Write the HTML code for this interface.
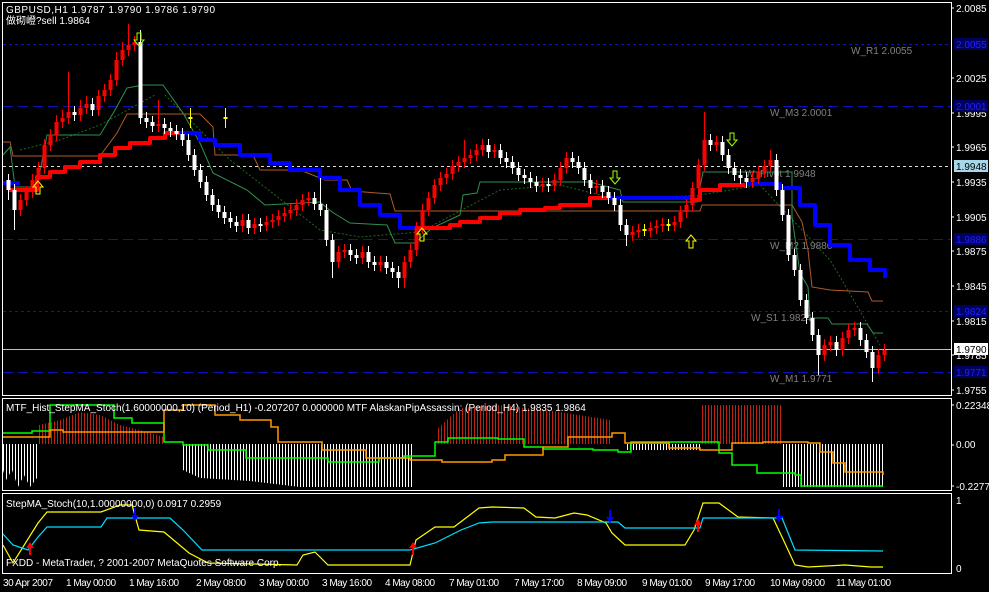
<!DOCTYPE html>
<html><head><meta charset="utf-8"><style>
html,body{margin:0;padding:0;background:#000;width:989px;height:592px;overflow:hidden}
svg{display:block;font-family:"Liberation Sans","Noto Sans CJK SC",sans-serif}
</style></head><body>
<svg width="989" height="592" viewBox="0 0 989 592" xmlns="http://www.w3.org/2000/svg">
<defs>
<pattern id="pw" x="0" y="0" width="3" height="10" patternUnits="userSpaceOnUse"><rect x="0" y="0" width="1" height="10" fill="#fff"/></pattern>
<pattern id="pr" x="0" y="0" width="3" height="10" patternUnits="userSpaceOnUse"><rect x="0" y="0" width="1" height="10" fill="#c02010"/></pattern>
</defs>
<rect width="989" height="592" fill="#000"/>
<rect x="2.5" y="2.5" width="949" height="393" fill="none" stroke="#fff"/>
<rect x="2.5" y="398.5" width="949" height="92" fill="none" stroke="#fff"/>
<rect x="2.5" y="493.5" width="949" height="80" fill="none" stroke="#fff"/>
<g stroke-width="1">
<line x1="3" x2="951" y1="44.5" y2="44.5" stroke="#1010c0" stroke-dasharray="3,3"/>
<line x1="3" x2="951" y1="106.5" y2="106.5" stroke="#1010c0" stroke-dasharray="10,5"/>
<line x1="3" x2="951" y1="166.5" y2="166.5" stroke="#ddd" stroke-dasharray="3,3"/>
<line x1="3" x2="951" y1="239.5" y2="239.5" stroke="#1010c0" stroke-dasharray="10,5"/>
<line x1="3" x2="951" y1="311.5" y2="311.5" stroke="#1010c0" stroke-dasharray="3,3"/>
<line x1="3" x2="951" y1="372.5" y2="372.5" stroke="#1010c0" stroke-dasharray="10,5"/>
</g>
<line x1="3" x2="951" y1="349.5" y2="349.5" stroke="#c0c0c0"/>
<g fill="#808080" font-size="10">
<text x="851" y="54">W_R1 2.0055</text>
<text x="770" y="116">W_M3 2.0001</text>
<text x="745" y="177">W_Pivot 1.9948</text>
<text x="770" y="249">W_M2 1.9886</text>
<text x="751" y="321">W_S1 1.9824</text>
<text x="770" y="382">W_M1 1.9771</text>
</g>
<polyline points="20,150 60,140 100,125 155,95" fill="none" stroke="#1a6a1a" stroke-dasharray="2,2"/>
<polyline points="165,95 230,160 320,230 360,237 420,232 500,190 560,185 620,200 700,195 760,185 830,260 880,345" fill="none" stroke="#1a6a1a" stroke-dasharray="2,2"/>
<polyline points="3,142 10,142 13,156 100,156 117,133 127,114 200,114 213,127 215,155 253,155 260,170 300,170 325,180 347,180 352,191 390,194 395,211 700,211 702,205 792,205 802,222 808,250 812,287 830,290 868,292 872,301 883,301" fill="none" stroke="#b05a28"/>
<polyline points="3,155 10,147 15,187 37,187 47,135 100,135 115,110 127,88 143,85 163,85 183,113 200,143 213,173 247,190 265,205 320,202 332,212 350,223 387,225 395,243 415,243 432,228 460,215 463,195 477,193 480,182 590,182 620,190 623,202 697,202 703,172 740,172 792,172 792,217 800,273 808,287 810,318 828,318 832,324 867,324 873,333 883,333" fill="none" stroke="#2f8f4f"/>
<g fill="none" stroke-width="4" stroke-linejoin="round">
<path stroke="#f00" d="M8 190 H37 V177 H50 V172 H65 V167 H80 V162 H100 V155 H115 V148 H130 V143 H150 V138 H165 V133 H180"/>
<path stroke="#00f" d="M180 133 H200 V140 H215 V145 H240 V155 H270 V163 H290 V170 H320 V178 H340 V190 H360 V205 H380 V215 H400 V228 H415"/>
<path stroke="#f00" d="M415 228 H450 V225 H460 V222 H480 V218 H500 V213 H520 V210 H545 V208 H560 V205 H590 V198 H608"/>
<path stroke="#00f" d="M608 198 H690 V200"/>
<path stroke="#f00" d="M690 200 H700 V190 H720 V185 H745 V184"/>
<path stroke="#00f" d="M745 184 H780 V188 H800 V205 H815 V225 H830 V245 H850 V260 H870 V270 H885 V278"/>
<path stroke="#00f" d="M3 183 H20"/>
</g>
<g fill="none" stroke-width="1">
<path stroke="#f00" d="M20.5 194V216M26.5 186V206M32.5 174V198M38.5 162V186M44.5 139V174M50.5 129V151M56.5 115V141M62.5 110V128M68.5 72V124M80.5 100V121M86.5 96V114M98.5 90V116M104.5 84V102M110.5 74V96M116.5 52V86M122.5 42V66M128.5 24V56M134.5 36V51M158.5 100V132M242.5 214V232M254.5 218V234M266.5 216V231M272.5 214V228M278.5 210V226M284.5 207V222M290.5 204V219M296.5 199V216M302.5 194V211M308.5 192V206M338.5 246V268M344.5 244V258M362.5 246V264M380.5 256V271M404.5 256V288M410.5 244V268M416.5 222V256M422.5 204V234M428.5 192V216M434.5 179V204M440.5 172V191M446.5 168V184M452.5 160V180M458.5 156V172M464.5 140V168M470.5 149V164M476.5 144V161M482.5 139V156M494.5 144V158M542.5 178V192M554.5 174V191M560.5 162V186M566.5 152V174M596.5 180V194M632.5 226V241M638.5 224V238M650.5 222V237M656.5 220V234M662.5 218V232M674.5 216V231M680.5 206V228M686.5 199V218M692.5 182V211M698.5 159V194M704.5 112V171M716.5 136V151M752.5 172V188M758.5 166V184M764.5 160V178M770.5 150V172M824.5 339V361M830.5 336V351M842.5 332V356M848.5 324V344M854.5 322V336M878.5 349V374M884.5 344V361"/>
<path stroke="#fff" d="M8.5 174V200M14.5 184V230M74.5 106V121M92.5 98V116M140.5 30V124M146.5 112V128M152.5 116V132M164.5 118V134M170.5 122V137M176.5 125V140M182.5 128V146M188.5 134V161M194.5 149V176M200.5 164V188M206.5 176V201M212.5 189V211M218.5 199V218M224.5 206V224M230.5 212V228M236.5 216V232M248.5 214V234M260.5 218V232M314.5 192V210M320.5 178V216M326.5 204V246M332.5 234V278M350.5 244V261M356.5 249V264M368.5 246V268M374.5 256V271M386.5 256V274M392.5 262V278M398.5 266V288M488.5 139V158M500.5 144V164M506.5 152V168M512.5 156V174M518.5 162V181M524.5 169V184M530.5 172V188M536.5 176V192M548.5 178V192M572.5 152V168M578.5 156V174M584.5 162V186M590.5 174V194M602.5 180V198M608.5 186V204M614.5 192V211M620.5 199V231M626.5 219V246M710.5 134V151M722.5 136V161M728.5 149V174M734.5 162V181M740.5 169V184M746.5 172V188M776.5 154V196M782.5 184V221M788.5 209V261M794.5 249V276M800.5 264V306M806.5 294V324M812.5 312V341M818.5 329V375M836.5 336V356M860.5 322V346M866.5 334V358M872.5 346V382"/>
<path stroke="#ff0" d="M644.5 224V236M668.5 219V231M190.5 108V128M225.5 108V128"/>
</g>
<g fill="none" stroke-width="4">
<path stroke="#f00" d="M20.5 200V210M26.5 192V200M32.5 180V192M38.5 168V180M44.5 145V168M50.5 135V145M56.5 122V135M62.5 118V122M68.5 112V118M80.5 108V115M86.5 104V108M98.5 96V110M104.5 90V96M110.5 80V90M116.5 60V80M122.5 50V60M128.5 45V50M134.5 42V45M158.5 124V126M242.5 220V226M254.5 224V228M266.5 222V225M272.5 220V222M278.5 216V220M284.5 213V216M290.5 210V213M296.5 205V210M302.5 200V205M308.5 198V200M338.5 252V262M344.5 250V252M362.5 252V258M380.5 262V265M404.5 262V278M410.5 250V262M416.5 228V250M422.5 210V228M428.5 198V210M434.5 185V198M440.5 178V185M446.5 174V178M452.5 166V174M458.5 162V166M464.5 158V162M470.5 155V158M476.5 150V155M482.5 145V150M494.5 150V152M542.5 184V186M554.5 180V185M560.5 168V180M566.5 158V168M596.5 186V188M632.5 232V235M638.5 230V232M650.5 228V231M656.5 226V228M662.5 224V226M674.5 222V225M680.5 212V222M686.5 205V212M692.5 188V205M698.5 165V188M704.5 140V165M716.5 142V145M752.5 178V182M758.5 172V178M764.5 166V172M770.5 160V166M824.5 345V355M830.5 342V345M842.5 338V350M848.5 330V338M854.5 328V330M878.5 355V368M884.5 350V355"/>
<path stroke="#fff" d="M8.5 180V190M14.5 190V210M74.5 112V115M92.5 104V110M140.5 42V118M146.5 118V122M152.5 122V126M164.5 124V128M170.5 128V131M176.5 131V134M182.5 134V140M188.5 140V155M194.5 155V170M200.5 170V182M206.5 182V195M212.5 195V205M218.5 205V212M224.5 212V218M230.5 218V222M236.5 222V226M248.5 220V228M260.5 224V226M314.5 198V204M320.5 204V210M326.5 210V240M332.5 240V262M350.5 250V255M356.5 255V258M368.5 252V262M374.5 262V265M386.5 262V268M392.5 268V272M398.5 272V278M488.5 145V152M500.5 150V158M506.5 158V162M512.5 162V168M518.5 168V175M524.5 175V178M530.5 178V182M536.5 182V186M548.5 184V186M572.5 158V162M578.5 162V168M584.5 168V180M590.5 180V188M602.5 186V192M608.5 192V198M614.5 198V205M620.5 205V225M626.5 225V235M710.5 140V145M722.5 142V155M728.5 155V168M734.5 168V175M740.5 175V178M746.5 178V182M776.5 160V190M782.5 190V215M788.5 215V255M794.5 255V270M800.5 270V300M806.5 300V318M812.5 318V335M818.5 335V355M836.5 342V350M860.5 328V340M866.5 340V352M872.5 352V368"/>
<path stroke="#ff0" d="M644.5 229V231M668.5 224V226M190.5 117V119M225.5 117V119"/>
</g>
<g fill="none">
<path stroke="#ff0" d="M38 181 l-5,6 h3 v7 h4 v-7 h3 z M422 228 l-5,6 h3 v7 h4 v-7 h3 z M691 235 l-5,6 h3 v7 h4 v-7 h3 z"/>
<path stroke="#a0ff00" d="M139 46 l-5,-6 h3 v-7 h4 v7 h3 z M615 184 l-5,-6 h3 v-7 h4 v7 h3 z M732 146 l-5,-6 h3 v-7 h4 v7 h3 z"/>
</g>
<polygon fill="url(#pw)" points="3,444 37,444 37,478 30,487 24,475 18,487 12,470 6,480 3,470"/>
<polygon fill="url(#pr)" points="39,444 164,444 164,437 140,430 120,425 100,415 80,412 60,420 39,425"/>
<polygon fill="url(#pw)" points="183,444 414,444 414,487 300,487 250,481 200,478 183,470"/>
<polygon fill="url(#pr)" points="436,444 610,444 610,420 560,412 500,405 460,408 436,430"/>
<polygon fill="url(#pw)" points="625,444 700,444 700,450 625,450"/>
<polygon fill="url(#pr)" points="702,444 782,444 782,405 702,405"/>
<polygon fill="url(#pw)" points="783,444 884,444 884,487 783,487"/>
<g fill="none" stroke-width="1.5">
<path stroke="#00ff00" d="M3 433 H32 V431 H50 V423 V405 H82 H114 V418 H132 V423 H164 V442 H183 V445 H208 V450 H246 V458 H328 V462 H379 V458 H404 V456 H435 V452 V442 H448 V438 H498 V439 H524 V447 H543 V449 H593 V450 H618 V452 H631 V442 H700 H719 V453 H732 V465 H757 V473 H795 V475 H801 V486 H883"/>
<path stroke="#ff9900" d="M3 437 H38 H50 V430 H63 V432 H145 H164 V410 H183 V405 H215 V415 H240 V420 H271 V427 H278 V442 H322 V450 H366 V458 H410 V460 H442 V462 H492 V460 H505 V455 H543 V447 H568 V437 H612 V433 H625 V443 H669 V448 H700 V450 H732 V443 H763 V442 H808 V443 H820 V452 H833 V463 H845 V472 H883 V475"/>
</g>
<polyline fill="none" stroke="#ffff00" stroke-width="1.2" points="3,545 13,563 38,523 47,512 101,512 120,505 132,505 139,530 164,532 189,553 208,563 297,565 303,555 315,552 328,565 410,565 416,540 435,527 454,527 479,508 492,507 524,508 536,517 555,518 574,513 587,515 606,523 612,533 625,545 685,545 694,530 703,503 719,503 738,517 773,518 782,537 795,565 808,567 845,565 871,567 883,567"/>
<polyline fill="none" stroke="#00e0ff" stroke-width="1.2" points="3,534 13,545 28,550 38,537 47,527 101,527 107,518 170,518 183,530 202,550 410,550 435,543 461,530 479,523 492,522 618,522 625,528 700,528 703,518 782,518 795,550 883,551"/>
<path fill="#f00" d="M30 542 l-4,6 h3 v7 h2 v-7 h3 z M413 542 l-4,6 h3 v7 h2 v-7 h3 z M698 519 l-4,6 h3 v7 h2 v-7 h3 z"/>
<path fill="#00f" d="M135 521 l-4,-6 h3 v-7 h2 v7 h3 z M610 523 l-4,-6 h3 v-7 h2 v7 h3 z M779 522 l-4,-6 h3 v-7 h2 v7 h3 z"/>
<g fill="#fff" font-size="10">
<text x="956" y="12">2.0085</text><text x="956" y="82">2.0025</text><text x="956" y="117">1.9995</text><text x="956" y="151">1.9965</text><text x="956" y="186">1.9935</text><text x="956" y="221">1.9905</text><text x="956" y="255">1.9875</text><text x="956" y="290">1.9845</text><text x="956" y="325">1.9815</text><text x="956" y="359">1.9785</text><text x="956" y="394">1.9755</text>
<text x="956" y="409">0.22348</text><text x="956" y="448">0.00</text><text x="956" y="490">-0.22771</text><text x="956" y="504">1</text><text x="956" y="572">0</text>
</g>
<g stroke="#fff"><path d="M951 8H954M951 78H954M951 113H954M951 147H954M951 182H954M951 217H954M951 251H954M951 286H954M951 321H954M951 355H954M951 390H954M951 405H954M951 445H954M951 486H954"/></g>
<g font-size="10">
<rect x="954" y="38" width="34" height="12" fill="#000060"/><text x="956" y="48" fill="#2020ff">2.0055</text>
<rect x="954" y="100" width="34" height="12" fill="#000060"/><text x="956" y="110" fill="#2020ff">2.0001</text>
<rect x="954" y="160" width="34" height="12" fill="#a8d8e8"/><text x="956" y="170" fill="#000">1.9948</text>
<rect x="954" y="233" width="34" height="12" fill="#000060"/><text x="956" y="243" fill="#2020ff">1.9886</text>
<rect x="954" y="305" width="34" height="12" fill="#000060"/><text x="956" y="315" fill="#2020ff">1.9824</text>
<rect x="954" y="343" width="34" height="12" fill="#fff"/><text x="956" y="353" fill="#000">1.9790</text>
<rect x="954" y="366" width="34" height="12" fill="#000060"/><text x="956" y="376" fill="#2020ff">1.9771</text>
</g>
<g fill="#fff" font-size="10">
<text x="6" y="13" textLength="209">GBPUSD,H1  1.9787 1.9790 1.9786 1.9790</text>
<text x="6" y="24">做砌嶝?sell 1.9864</text>
<text x="6" y="411">MTF_Hist_StepMA_Stoch(1.60000000,10) (Period_H1) -0.207207 0.000000  MTF AlaskanPipAssassin: (Period_H4) 1.9835 1.9864</text>
<text x="6" y="507">StepMA_Stoch(10,1.00000000,0) 0.0917 0.2959</text>
<text x="6" y="566">FXDD - MetaTrader, ? 2001-2007 MetaQuotes Software Corp.</text>
</g>
<g fill="#fff" font-size="10">
<text x="3" y="586" textLength="50">30 Apr 2007</text><text x="66" y="586" textLength="50">1 May 00:00</text><text x="129" y="586" textLength="50">1 May 16:00</text><text x="196" y="586" textLength="50">2 May 08:00</text><text x="259" y="586" textLength="50">3 May 00:00</text><text x="322" y="586" textLength="50">3 May 16:00</text><text x="385" y="586" textLength="50">4 May 08:00</text><text x="449" y="586" textLength="50">7 May 01:00</text><text x="514" y="586" textLength="50">7 May 17:00</text><text x="577" y="586" textLength="50">8 May 09:00</text><text x="642" y="586" textLength="50">9 May 01:00</text><text x="705" y="586" textLength="50">9 May 17:00</text><text x="770" y="586" textLength="55">10 May 09:00</text><text x="836" y="586" textLength="55">11 May 01:00</text>
</g>
</svg>
</body></html>
